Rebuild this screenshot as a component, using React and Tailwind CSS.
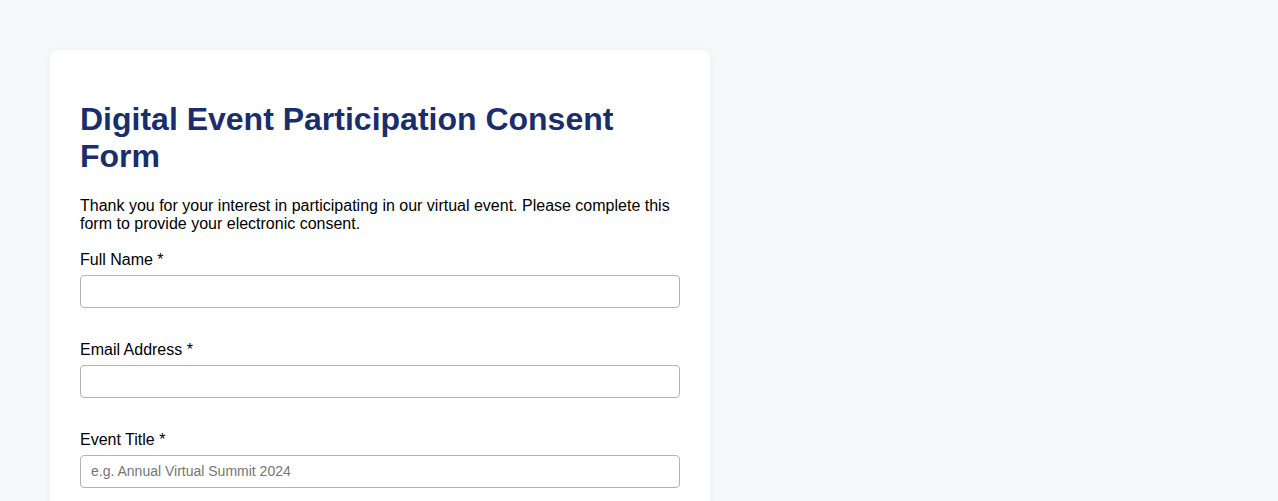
export default function App() {
  const fields = [
    { id: 'fullName', label: 'Full Name *', type: 'text', placeholder: '' },
    { id: 'email', label: 'Email Address *', type: 'email', placeholder: '' },
    { id: 'eventTitle', label: 'Event Title *', type: 'text', placeholder: 'e.g. Annual Virtual Summit 2024' },
  ];

  return (
    <div
      className="min-h-screen bg-[#f7f8fa] pt-[50px] pl-[50px] text-black"
      style={{ fontFamily: '"Liberation Sans", Arial, sans-serif' }}
    >
      <div className="w-[660px] rounded-lg bg-white p-[30px] shadow-[0_2px_10px_rgba(0,0,0,0.06)]">
        <h1 className="mt-[21px] mb-[22px] text-[32px] font-bold leading-[36.8px] text-[#1a2e6c]">
          Digital Event Participation Consent Form
        </h1>
        <p className="text-base leading-[18px]">
          Thank you for your interest in participating in our virtual event. Please complete this form to provide your
          electronic consent.
        </p>

        <form className="mt-[18px] flex flex-col gap-[33px]">
          {fields.map((f) => (
            <div key={f.id}>
              <label htmlFor={f.id} className="mb-[6px] block text-base leading-[18px]">
                {f.label}
              </label>
              <input
                id={f.id}
                type={f.type}
                placeholder={f.placeholder}
                className="block h-[33px] w-full rounded border border-[#b3b3b3] bg-white px-[10px] text-sm placeholder:text-[#757575] focus:outline-none"
              />
            </div>
          ))}
        </form>
      </div>
    </div>
  );
}
